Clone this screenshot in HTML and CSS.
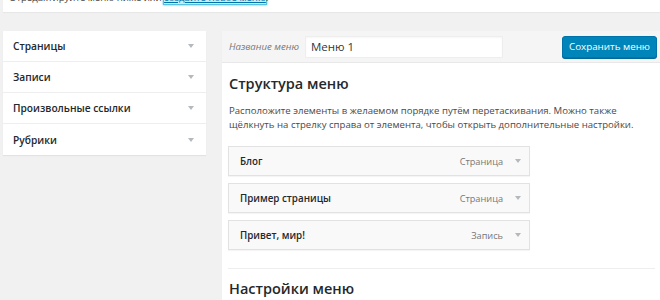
FILE: index.html
```html
<!DOCTYPE html>
<html lang="ru">
<head>
<meta charset="utf-8">
<link rel="stylesheet" href="styles.css">
</head>
<body>
<div class="notice"><p>Отредактируйте меню ниже или <a href="#" class="focus">создайте новое меню</a>.</p></div>
<div class="layout">
  <aside class="side">
    <div class="acc">Страницы<span class="arr"></span></div>
    <div class="acc">Записи<span class="arr"></span></div>
    <div class="acc">Произвольные ссылки<span class="arr"></span></div>
    <div class="acc">Рубрики<span class="arr"></span></div>
  </aside>
  <main class="editor">
    <div class="head">
      <label class="name-label">Название меню</label>
      <input class="name-input" value="Меню 1">
      <button class="save">Сохранить меню</button>
    </div>
    <div class="body">
      <h3 class="title">Структура меню</h3>
      <p class="desc">Расположите элементы в желаемом порядке путём перетаскивания. Можно также<br>щёлкнуть на стрелку справа от элемента, чтобы открыть дополнительные настройки.</p>
      <ul class="items">
        <li class="item"><span class="iname">Блог</span><span class="itype">Страница</span><span class="arr"></span></li>
        <li class="item"><span class="iname">Пример страницы</span><span class="itype">Страница</span><span class="arr"></span></li>
        <li class="item"><span class="iname">Привет, мир!</span><span class="itype">Запись</span><span class="arr"></span></li>
      </ul>
      <hr class="sep">
      <h3 class="title title-second">Настройки меню</h3>
    </div>
  </main>
</div>
</body>
</html>
```
FILE: styles.css
```css
html, body { margin: 0; padding: 0; }
body {
  background: #f1f1f1;
  font-family: "Open Sans", "Noto Sans", sans-serif;
  color: #23282d;
  width: 660px;
  height: 300px;
  overflow: hidden;
}
.notice {
  margin-left: 3px;
  height: 12px;
  background: #fff;
  box-shadow: 0 1px 1px rgba(0,0,0,.04);
  display: flex;
  align-items: flex-end;
  overflow: hidden;
}
.notice p {
  margin: 0 0 6px 6px;
  font-size: 9.6px;
  line-height: 16px;
  color: #444;
  white-space: nowrap;
}
.focus {
  color: #0073aa;
  background: #c9ecf6;
  box-shadow: 0 0 0 1px #5bc0de, 0 0 2px 1px rgba(30,170,210,.8);
}
.layout {
  display: flex;
  align-items: flex-start;
  margin-top: 19px;
  padding-left: 3px;
  gap: 16px;
}
.side {
  width: 203px;
  flex: none;
  background: #fff;
  box-shadow: 0 1px 1px rgba(0,0,0,.06);
}
.acc {
  height: 30px;
  display: flex;
  align-items: center;
  justify-content: space-between;
  padding: 0 12px 0 10px;
  font-size: 10.2px;
  font-weight: 600;
  color: #23282d;
  border-bottom: 1px solid #eee;
}
.acc:last-child { border-bottom: none; height: 31px; }
.arr {
  width: 0; height: 0;
  border-left: 3.5px solid transparent;
  border-right: 3.5px solid transparent;
  border-top: 4px solid #b4b9be;
}
.editor {
  flex: 1;
  min-width: 0;
  overflow: hidden;
  background: #fff;
  box-shadow: 0 1px 1px rgba(0,0,0,.04);
  min-height: 280px;
}
.head {
  height: 31px;
  background: #f5f5f5;
  border-bottom: 1px solid #e8e8e8;
  display: flex;
  align-items: center;
  padding: 0 3px 0 7px;
}
.name-label {
  font-size: 9.6px;
  font-style: italic;
  color: #777;
  width: 76px;
  white-space: nowrap;
}
.name-input {
  width: 186px;
  height: 20px;
  border: 1px solid #eee;
  box-shadow: inset 0 1px 2px rgba(0,0,0,.04);
  padding: 0 5px;
  font-family: inherit;
  font-size: 11.5px;
  color: #32373c;
  background: #fff;
  box-sizing: content-box;
}
.save {
  margin-left: auto;
  height: 22px;
  width: 95px;
  padding: 0;
  background: #0085ba;
  border: 1px solid #0073aa;
  border-radius: 3px;
  box-shadow: 0 1px 0 #006799;
  color: #fff;
  font-family: inherit;
  font-size: 9.8px;
}
.body { padding: 0 5px 0 6px; }
.title {
  margin: 10px 0 0 1px;
  font-size: 14.5px;
  font-weight: 600;
  color: #23282d;
  line-height: 22px;
}
.desc {
  margin: 9px 0 0 1px;
  font-size: 9.6px;
  line-height: 14px;
  color: #4a4a4a;
  white-space: nowrap;
}
.items {
  list-style: none;
  margin: 14px 0 0 0;
  padding: 0;
  width: 302px;
  display: flex;
  flex-direction: column;
  gap: 7px;
}
.item {
  height: 28px;
  background: #f9f9f9;
  border: 1px solid #e2e2e2;
  box-shadow: 0 1px 1px rgba(0,0,0,.04);
  display: flex;
  align-items: center;
  padding: 0 8px 0 11px;
  font-size: 9.8px;
}
.iname { font-weight: 600; color: #23282d; flex: 1; }
.itype { color: #777; font-size: 9.2px; margin-right: 12px; }
.sep {
  margin: 18px 0 0 0;
  border: 0;
  border-top: 1px solid #eee;
}
.title-second { margin-top: 9px; }
```
